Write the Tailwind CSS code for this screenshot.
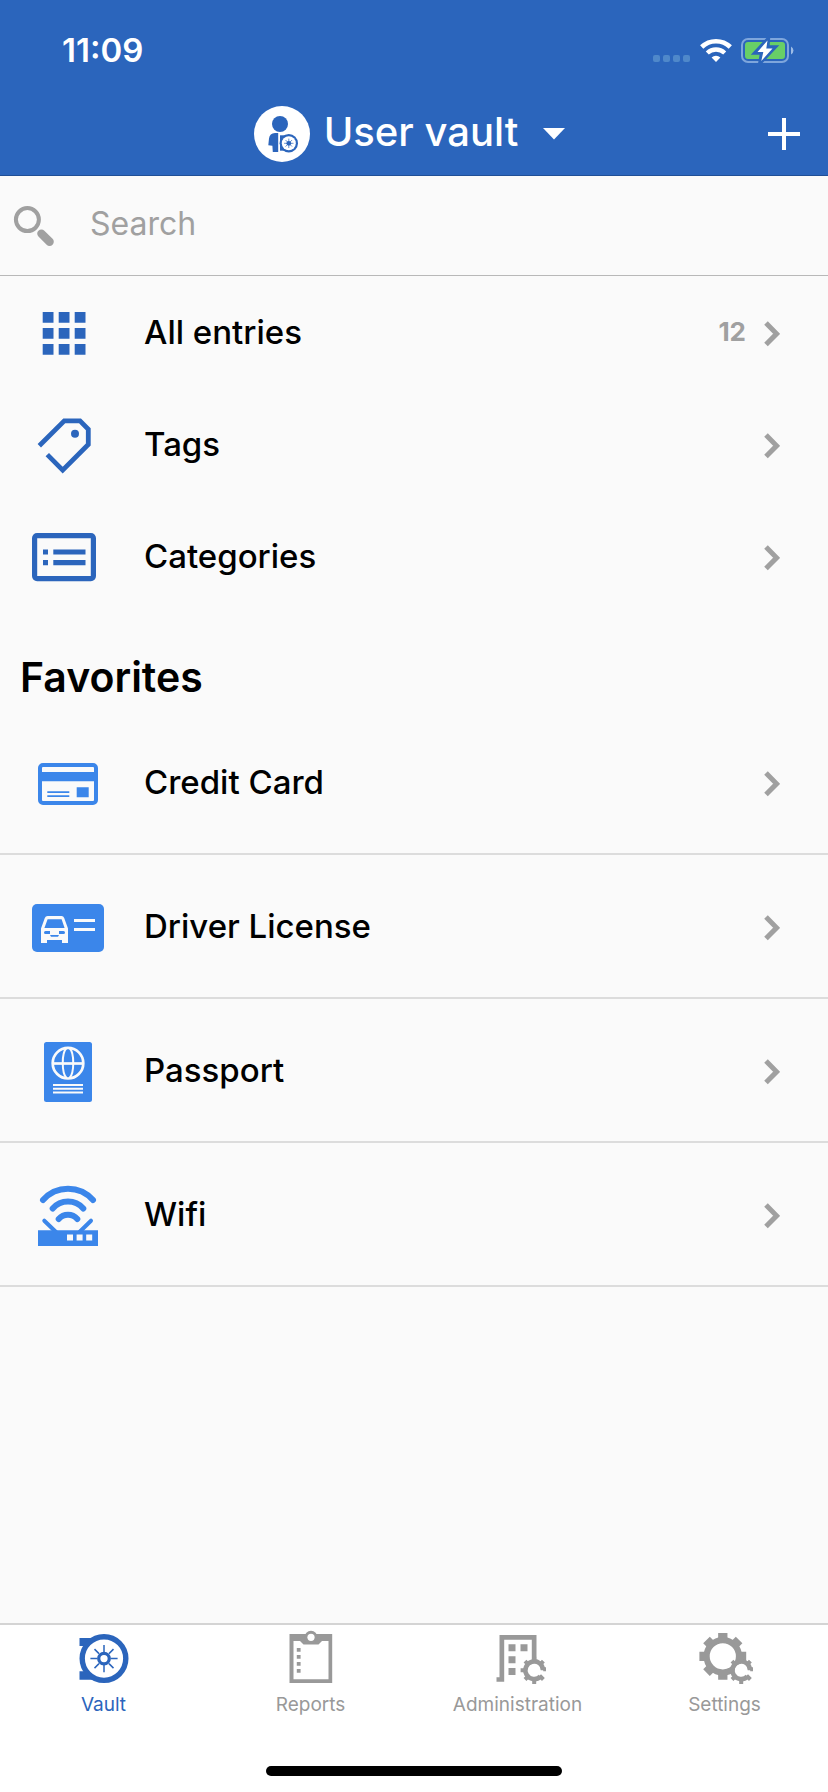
<!DOCTYPE html>
<html lang="en">
<head>
  <meta charset="UTF-8">
  <meta name="viewport" content="width=device-width, initial-scale=1.0">
  <title>User vault</title>
  <script src="https://cdn.jsdelivr.net/npm/@tailwindcss/browser@4"></script>
</head>
<body class="bg-[#fafafa] text-black font-['Inter',sans-serif]">
  <!-- shared shapes -->
  <svg class="hidden" aria-hidden="true">
    <symbol id="chevron" viewBox="0 0 16 26">
      <path d="M2 2 L12.6 12.8 L2 23.6" fill="none" stroke="currentColor" stroke-width="5"/>
    </symbol>
    <symbol id="small-gear" viewBox="0 0 28 28">
      <path d="M22.8 14 A8.8 8.8 0 1 0 20.2 20.2" fill="none" stroke="currentColor" stroke-width="4.6"/>
      <path d="M23 13 H26 M5 14 H.3 M14 23 V27.7 M14 5 V.5 M7.5 7.5 L4.8 4.8 M20.5 7.5 L23.2 4.8 M7.5 20.5 L4.8 23.2 M19.4 19.4 L23.2 23.2" stroke="currentColor" stroke-width="4"/>
    </symbol>
  </svg>

  <div class="min-h-screen flex flex-col">
    <header class="bg-[#2b65bc] text-white border-b border-[#204f96]">
      <!-- status bar -->
      <div class="h-[88px] pt-3 pl-[62px] pr-[33px] flex items-center justify-between">
        <span class="text-[33px] leading-10 font-semibold">11:09</span>
        <div class="flex items-center gap-[9px]">
          <svg class="w-[38px] h-[25px]" viewBox="0 0 38 25" fill="#4f88ca">
            <rect x="0" y="17" width="7" height="7" rx="2"/>
            <rect x="10" y="17" width="7" height="7" rx="2"/>
            <rect x="20" y="17" width="7" height="7" rx="2"/>
            <rect x="30" y="17" width="7" height="7" rx="2"/>
          </svg>
          <svg class="w-8 h-[25px]" viewBox="0 0 32 25" fill="none" stroke="#fff">
            <path d="M1.7 9 A20.5 20.5 0 0 1 30.3 9" stroke-width="4.6"/>
            <path d="M7.3 15 A12.7 12.7 0 0 1 24.7 15" stroke-width="4.4"/>
            <path d="M16 24 L11.6 19.6 A6.2 6.2 0 0 1 20.4 19.6 Z" fill="#fff" stroke="none"/>
          </svg>
          <svg class="w-[54px] h-[25px]" viewBox="0 0 54 25">
            <rect x="1" y="1" width="46" height="23" rx="6" fill="none" stroke="#7ea6dc" stroke-width="2"/>
            <path d="M50 8.5 A4.5 4.5 0 0 1 50 16.5 Z" fill="#9dbce6"/>
            <rect x="4" y="4" width="40" height="17" rx="3" fill="#68cf67"/>
            <path d="M26.5 2.5 L15.5 14.3 H21.5 L20 23 L32.5 9.7 H26 Z" fill="#fff" stroke="#2b65bc" stroke-width="5"/>
            <path d="M26.5 2.5 L16.5 14 H22.3 L20.3 23 L31.5 10.5 H25.3 Z" fill="#fff"/>
          </svg>
        </div>
      </div>
      <!-- title bar -->
      <div class="h-[87px] pt-1 grid grid-cols-[1fr_auto_1fr] items-center">
        <button type="button" class="col-start-2 flex items-center">
          <svg class="w-14 h-14 mr-[14px]" viewBox="0 0 56 56" fill="#2b65bc" aria-hidden="true">
            <circle cx="28" cy="28" r="28" fill="#fff"/>
            <circle cx="26" cy="18" r="8"/>
            <path d="M24.2 27 H21 Q15.6 27.2 15 32.5 L14.3 39.2 L18.4 39.8 L18.8 46 H24.2 Z"/>
            <path d="M26 29.3 H32 V44.7 H26 Z"/>
            <circle cx="34.8" cy="37.3" r="9.2"/>
            <circle cx="34.8" cy="37.3" r="7" fill="#fff"/>
            <circle cx="34.8" cy="37.3" r="2.4"/>
            <path d="M34.8 32.6 V42 M30.1 37.3 H39.5 M31.5 34 L38.1 40.6 M38.1 34 L31.5 40.6" stroke="#2b65bc" stroke-width=".7"/>
          </svg>
          <span class="text-[40px] leading-[48px] font-medium pb-1">User vault</span>
          <svg class="w-10 h-10 ml-4" viewBox="0 0 40 40" aria-hidden="true"><path d="M9 14 H31 L20 25.5 Z" fill="#fff"/></svg>
        </button>
        <button type="button" aria-label="Add entry" class="justify-self-end mr-7">
          <svg class="w-8 h-8" viewBox="0 0 32 32"><path d="M16 0 V32 M0 16 H32" stroke="#fff" stroke-width="4"/></svg>
        </button>
      </div>
    </header>

    <main class="flex-1">
      <form class="h-[100px] pl-3 flex items-center border-b border-[#b8b8b8]">
        <label for="search" class="mr-[34px]" aria-label="Search">
          <svg class="w-11 h-11" viewBox="0 0 44 44" aria-hidden="true">
            <circle cx="15.4" cy="15.6" r="11.5" fill="none" stroke="#a0a0a0" stroke-width="4"/>
            <path d="M29.4 29.6 L37.6 37.8" stroke="#a0a0a0" stroke-width="8.4" stroke-linecap="round"/>
          </svg>
        </label>
        <input id="search" type="text" placeholder="Search" class="flex-1 min-w-0 h-16 pb-1 text-[32px] bg-transparent outline-none placeholder:text-[#a0a0a0]">
      </form>

      <nav class="pt-0.5">
        <a href="#all" class="h-28 pl-8 pr-12 flex items-center text-[33px] leading-10 font-medium">
          <svg class="w-16 h-16 mr-12" viewBox="0 0 64 64" fill="#2b65bc" aria-hidden="true">
            <path d="M10.7 10h10.8v10.8h-10.8z M26.7 10h10.8v10.8h-10.8z M42.7 10h10.8v10.8h-10.8z M10.7 26h10.8v10.8h-10.8z M26.7 26h10.8v10.8h-10.8z M42.7 26h10.8v10.8h-10.8z M10.7 42h10.8v10.8h-10.8z M26.7 42h10.8v10.8h-10.8z M42.7 42h10.8v10.8h-10.8z"/>
          </svg>
          <span class="flex-1 pb-1">All entries</span>
          <span class="pb-1 mr-[18px] text-[26px] font-bold text-[#a0a0a0]">12</span>
          <svg class="w-4 h-[26px] text-[#a0a0a0]"><use href="#chevron"/></svg>
        </a>
        <a href="#tags" class="h-28 pl-8 pr-12 flex items-center text-[33px] leading-10 font-medium">
          <svg class="w-16 h-16 mr-12" viewBox="0 0 64 64" aria-hidden="true">
            <path d="M7.3 31.7 L32.3 6.9 H48 L56.3 15.2 V30.5 L30.7 56.1 L15.3 40.6" fill="none" stroke="#2b65bc" stroke-width="4.8"/>
            <circle cx="43" cy="19.7" r="4" fill="#2b65bc"/>
          </svg>
          <span class="flex-1 pb-1">Tags</span>
          <svg class="w-4 h-[26px] text-[#a0a0a0]"><use href="#chevron"/></svg>
        </a>
        <a href="#categories" class="h-28 pl-8 pr-12 flex items-center text-[33px] leading-10 font-medium">
          <svg class="w-16 h-16 mr-12" viewBox="0 0 64 64" fill="#2b65bc" aria-hidden="true">
            <rect x="2.6" y="9.6" width="58.8" height="43" rx="2.5" fill="none" stroke="#2b65bc" stroke-width="5.2"/>
            <path d="M11 23.4h5v5.2h-5z M21.3 23.4h32.2v5.2h-32.2z M11 34h5v5.2h-5z M21.3 34h32.2v5.2h-32.2z"/>
          </svg>
          <span class="flex-1 pb-1">Categories</span>
          <svg class="w-4 h-[26px] text-[#a0a0a0]"><use href="#chevron"/></svg>
        </a>
      </nav>

      <section>
        <h2 class="h-[97px] pt-7 px-5 flex items-center text-[41px] leading-[48px] font-semibold">Favorites</h2>
        <ul>
          <li>
            <a href="#credit-card" class="h-36 pt-1 pl-8 pr-12 flex items-center border-b-2 border-[#dcdcdc] text-[33px] leading-10 font-medium">
              <svg class="w-[72px] h-[72px] mr-10" viewBox="0 0 72 72" fill="#3b86ea" aria-hidden="true">
                <rect x="8" y="17" width="56" height="38" rx="3" fill="none" stroke="#3b86ea" stroke-width="4"/>
                <path d="M8 24h56v9.3h-56z M15.3 43.3h22v1.8h-22z M15.3 47.2h22v1.8h-22z M44.7 39.3h12v10h-12z"/>
              </svg>
              <span class="flex-1 pb-1">Credit Card</span>
              <svg class="w-4 h-[26px] text-[#a0a0a0]"><use href="#chevron"/></svg>
            </a>
          </li>
          <li>
            <a href="#driver-license" class="h-36 pt-1 pl-8 pr-12 flex items-center border-b-2 border-[#dcdcdc] text-[33px] leading-10 font-medium">
              <svg class="w-[72px] h-[72px] mr-10" viewBox="0 0 72 72" fill="#fafafa" aria-hidden="true">
                <rect x="0" y="12" width="72" height="48" rx="5" fill="#3b86ea"/>
                <path fill-rule="evenodd" d="M9 36.5 L12.8 26 Q13.6 24 15.6 24 H29.6 Q31.4 24 32.2 26 L36 36.5 V51 H30 V48 H15 V51 H9 Z M15.6 27.2 L12.4 36 H32.6 L29.6 27.2 Z"/>
                <path d="M13.5 39h4.5v3h-4.5q-1.5 0 -1.5 -1.5t1.5 -1.5z M31.5 39h-4.5v3h4.5q1.5 0 1.5 -1.5t-1.5 -1.5z M18 43h9l-1 1.7h-7z" fill="#3b86ea"/>
                <path d="M42 27h21v3h-21z M42 36h21v3h-21z"/>
              </svg>
              <span class="flex-1 pb-1">Driver License</span>
              <svg class="w-4 h-[26px] text-[#a0a0a0]"><use href="#chevron"/></svg>
            </a>
          </li>
          <li>
            <a href="#passport" class="h-36 pt-1 pl-8 pr-12 flex items-center border-b-2 border-[#dcdcdc] text-[33px] leading-10 font-medium">
              <svg class="w-[72px] h-[72px] mr-10" viewBox="0 0 72 72" fill="none" stroke="#fafafa" aria-hidden="true">
                <rect x="12" y="6" width="48" height="60" rx="2.5" fill="#3b86ea" stroke="none"/>
                <circle cx="36" cy="27.2" r="15.3" stroke-width="2.7"/>
                <path d="M20.5 27.5 H51.5" stroke-width="2.7"/>
                <path d="M34.5 12 C29.5 17 29.5 37 34.5 42 M37.5 12 C42.5 17 42.5 37 37.5 42" stroke-width="2"/>
                <path d="M21 49 H51 M21 52.7 H51 M21 56.6 H51" stroke-width="2"/>
              </svg>
              <span class="flex-1 pb-1">Passport</span>
              <svg class="w-4 h-[26px] text-[#a0a0a0]"><use href="#chevron"/></svg>
            </a>
          </li>
          <li>
            <a href="#wifi" class="h-36 pt-1 pl-8 pr-12 flex items-center border-b-2 border-[#dcdcdc] text-[33px] leading-10 font-medium">
              <svg class="w-[72px] h-[72px] mr-10" viewBox="0 0 72 72" fill="none" stroke="#3b86ea" stroke-linecap="round" aria-hidden="true">
                <path d="M11 20 A33.3 33.3 0 0 1 61 20 M20.7 28.5 A20.3 20.3 0 0 1 51.3 28.5 M26.7 39 A12.5 12.5 0 0 1 45.3 39" stroke-width="6"/>
                <path d="M12.3 40.7 L24 52 M59 40.7 L47.5 52" stroke-width="4"/>
                <path d="M6 50.3h60v15.7h-60z" fill="#3b86ea" stroke="none"/>
                <path d="M35 54.5h6v6h-6z M44.6 54.5h6v6h-6z M54.2 54.5h6v6h-6z" fill="#fafafa" stroke="none"/>
              </svg>
              <span class="flex-1 pb-1">Wifi</span>
              <svg class="w-4 h-[26px] text-[#a0a0a0]"><use href="#chevron"/></svg>
            </a>
          </li>
        </ul>
      </section>
    </main>

    <!-- tab bar -->
    <footer class="bg-white border-t-2 border-[#d4d4d4] pt-1 pb-4">
      <nav class="grid grid-cols-4 mb-[49px] text-[19px] leading-6 text-[#999999]">
        <a href="#vault" class="flex flex-col items-center gap-2 text-[#2b65bc]">
          <svg class="w-14 h-14" viewBox="0 0 56 56" fill="none" stroke="currentColor" aria-hidden="true">
            <path d="M3.5 9 H17 L9 17 H3.5 Z M3.5 42.3 H9 L17 50.7 H3.5 Z" fill="currentColor" stroke="none"/>
            <circle cx="28" cy="29.6" r="21.8" stroke-width="5.4"/>
            <circle cx="28" cy="29.6" r="5.3" stroke-width="3.3"/>
            <path d="M28 16 V23 M28 36 V43.2 M14.4 29.6 H21 M35 29.6 H41.6 M18.5 20.1 L23 24.6 M37.5 20.1 L33 24.6 M18.5 39.1 L23 34.6 M37.5 39.1 L33 34.6" stroke-width="1.5"/>
          </svg>
          <span>Vault</span>
        </a>
        <a href="#reports" class="flex flex-col items-center gap-2">
          <svg class="w-14 h-14" viewBox="0 0 56 56" fill="currentColor" aria-hidden="true">
            <path fill-rule="evenodd" d="M6.5 5 H49.2 V54 H6.5 Z M10.5 12 V50.3 H45.5 V12 Z"/>
            <path d="M17.5 10 H38.5 V12.5 L35.5 15.6 H20.5 L17.5 12.5 Z"/>
            <circle cx="28" cy="8.3" r="6.5"/>
            <circle cx="28" cy="8.3" r="3.6" fill="#fff"/>
            <path d="M13.8 19h3.8v3.8h-3.8z M13.8 26h3.8v3.8h-3.8z M13.8 33h3.8v3.8h-3.8z M13.8 40h3.8v3.8h-3.8z"/>
          </svg>
          <span>Reports</span>
        </a>
        <a href="#administration" class="flex flex-col items-center gap-2">
          <svg class="w-14 h-14" viewBox="0 0 56 56" fill="currentColor" aria-hidden="true">
            <path d="M9.5 6 H46.5 V31 H41.8 V10.8 H14.2 V52.7 H6.5 V48.3 H9.5 Z"/>
            <path d="M18.5 15.3h7v7h-7z M30.5 15.3h7v7h-7z M18.5 27.3h7v7h-7z M18.5 39h7v7h-7z"/>
            <use href="#small-gear" x="30.2" y="27.3" width="28" height="28"/>
          </svg>
          <span>Administration</span>
        </a>
        <a href="#settings" class="flex flex-col items-center gap-2">
          <svg class="w-14 h-14" viewBox="0 0 56 56" fill="none" stroke="currentColor" aria-hidden="true">
            <circle cx="25.8" cy="27.3" r="16.2" stroke-width="6.2"/>
            <path d="M25.8 10 V4 M25.8 45 V50.7 M8 27.3 H2.4 M43.5 27.3 H49.2 M13.5 15 L9.5 11 M38.1 15 L42.1 11 M13.5 39.6 L9.5 43.6" stroke-width="9.3"/>
            <circle cx="44.2" cy="41.3" r="6.5" fill="#fff" stroke="none"/>
            <use href="#small-gear" x="30.2" y="27.3" width="28" height="28"/>
          </svg>
          <span>Settings</span>
        </a>
      </nav>
      <div class="w-[296px] h-[10px] mx-auto rounded-full bg-black"></div>
    </footer>
  </div>
</body>
</html>
